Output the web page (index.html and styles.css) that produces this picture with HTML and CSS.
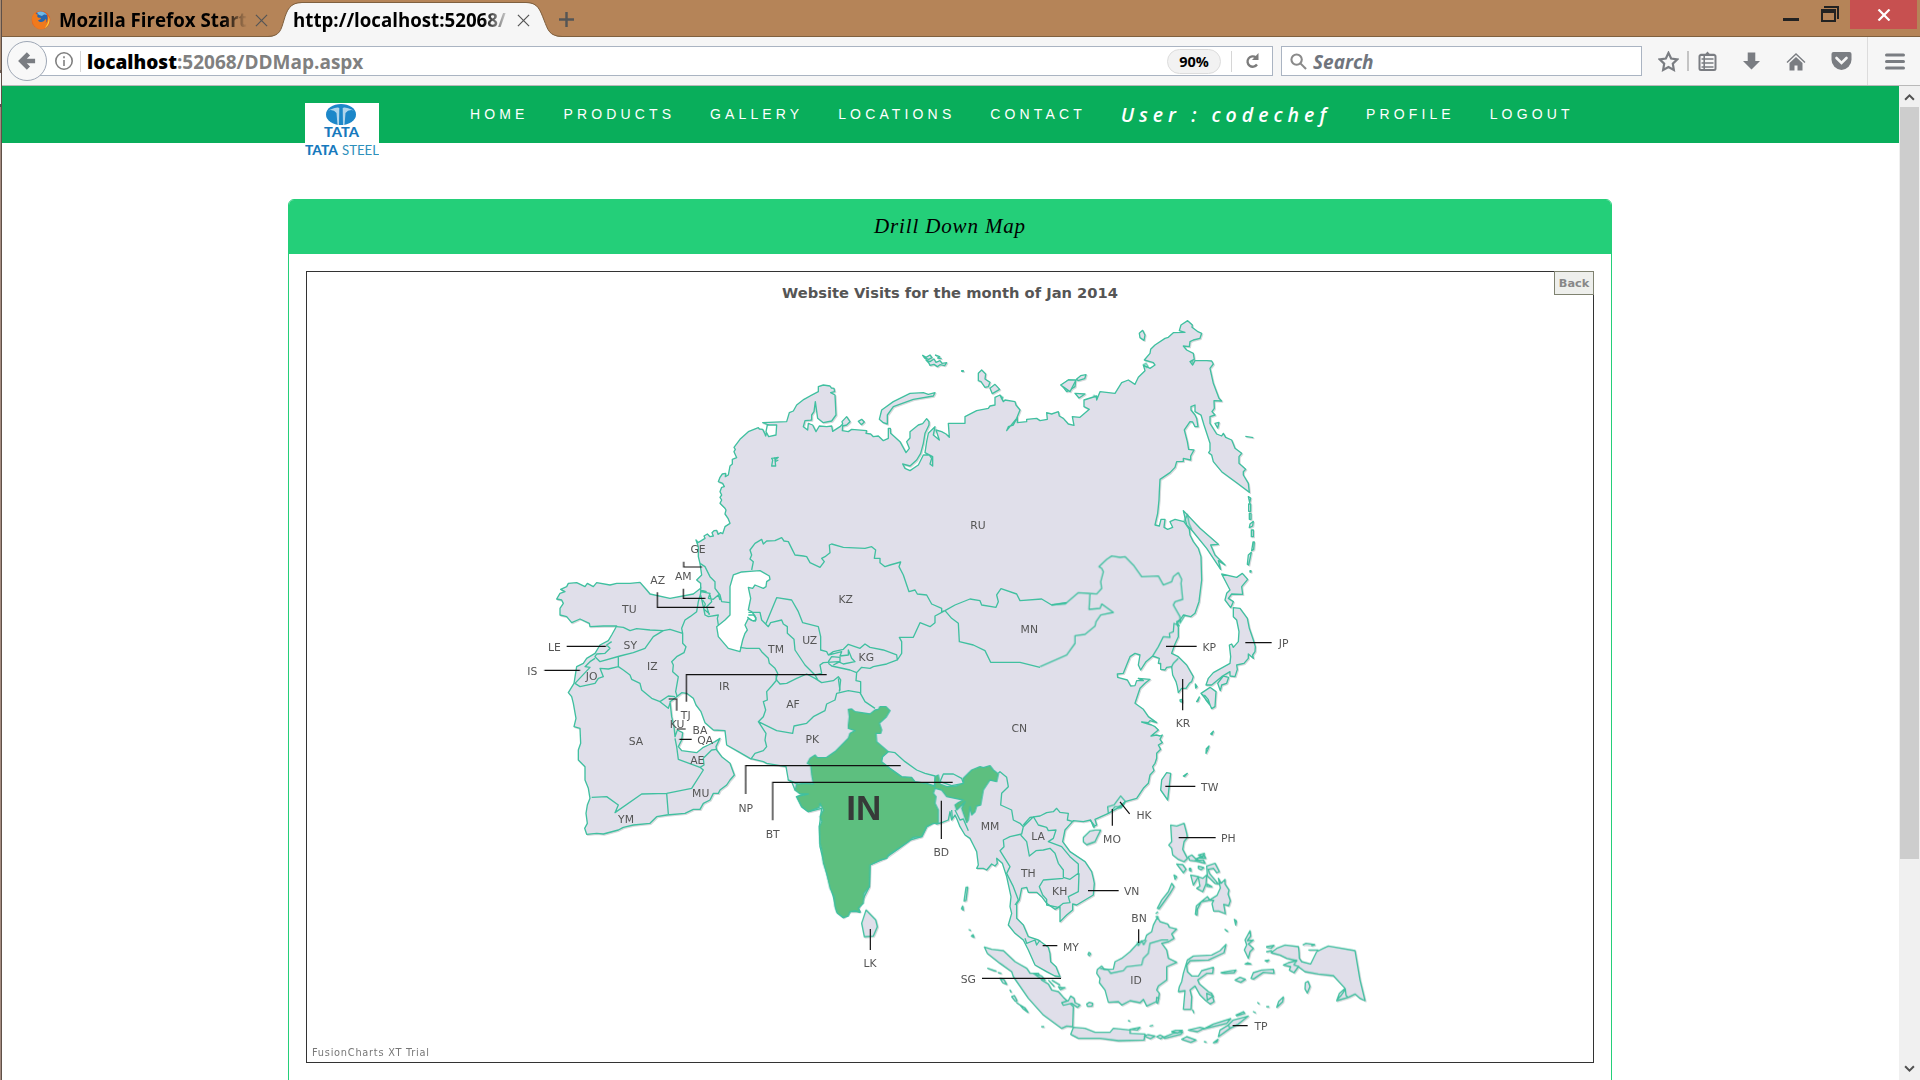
FILE: index.html
```html
<!DOCTYPE html>
<html lang="en">
<head>
<meta charset="utf-8">
<title>Drill Down Map</title>
<link rel="stylesheet" href="styles.css">
</head>
<body>
<div class="window">
  <div class="edge"></div>
  <div class="browser">
    <header class="tabs">
      <div class="tab">
        <svg class="fox" viewBox="0 0 20 20"><circle cx="10" cy="10" r="9.3" fill="#e8601c"/><circle cx="10" cy="8" r="6.600" fill="#2766ad"/><path d="M6 2.500c4-2 8-.5 10 2.500-2-1-4-.5-5 1-2-.5-4-1-5-3.500z" fill="#6fb8e6"/><path d="M1 7c1-2 2-4 3-5 0 2 1 2 3 2.500-1 1-1 2 0 3l3 .5c0 1.500-2 1.500-3 2.500 2 2.500 6 2 7.500-1.500 1.500 1 1 2.500 0 4 2-.5 3-3 3-6 2 4 .5 9-3.500 11.300C9 21 .5 18 1 7z" fill="#f07a1d"/><path d="M17.500 6c2 4 1 9-3.500 12 2.500-4 4-6 3.500-12z" fill="#fcd43c"/></svg>
        <span class="tab-text">Mozilla Firefox Start</span>
        <svg class="x" viewBox="0 0 14 14"><path d="M1 1l12 12M13 1L1 13"/></svg>
      </div>
      <div class="tab active">
        <svg class="tab-shape" viewBox="0 0 294 37"><path class="tab-fill" d="M0 37C12 36 13 30 16 20S22 3 34 3H258C270 3 272 10 276 20S281 36 294 37z"/><path class="tab-line" d="M0 36.500C12 36 13 30 16 20S22 2.500 34 2.500H258C270 2.500 272 10 276 20S281 36 294 36.500"/></svg>
        <span class="tab-text">http://localhost:52068/</span>
        <svg class="x" viewBox="0 0 14 14"><path d="M1 1l12 12M13 1L1 13"/></svg>
      </div>
      <svg class="plus" viewBox="0 0 16 16"><path d="M8 0v16M0 8h16"/></svg>
      <div class="controls">
        <svg class="min" viewBox="0 0 16 3"><path d="M0 0h16v3H0z"/></svg>
        <svg class="restore" viewBox="0 0 18 16"><path d="M3 0h15v13h-2V2H3zM0 3h15v13H0zM2 7v7h11V7z" fill-rule="evenodd"/></svg>
        <div class="close"><svg viewBox="0 0 14 12"><path d="M1.500 0.500l11 11M12.500 .5l-11 11"/></svg></div>
      </div>
    </header>
    <div class="toolbar">
      <div class="back"><svg viewBox="0 0 20 20"><path d="M11 2.500L3.500 10l7.500 7.500M4 10h14" fill="none" stroke="#7a7d82" stroke-width="4.800"/></svg></div>
      <div class="address">
        <svg class="info" viewBox="0 0 18 18"><circle cx="9" cy="9" r="8.200"/><path d="M9 8v6M9 4.300v2"/></svg>
        <i class="rule"></i>
        <span class="url"><b>localhost</b>:52068/DDMap.aspx</span>
        <span class="zoom">90%</span>
        <i class="rule"></i>
        <svg class="reload" viewBox="0 0 14 16"><path d="M11 4.500A5.200 5.200 0 1 0 12 11.500" fill="none" stroke="#7c7c7c" stroke-width="2.300"/><path d="M13.500 0v7H7z" fill="#7c7c7c"/></svg>
      </div>
      <div class="search">
        <svg viewBox="0 0 18 18"><circle cx="7" cy="7" r="5.500"/><path d="M11 11l6 6"/></svg>
        <span>Search</span>
      </div>
      <div class="icons">
        <svg class="star" viewBox="0 0 20 20"><path d="M10 1.800l2.500 5.400 5.900.8-4.300 4.100 1 5.900-5.100-2.800L4.900 18l1-5.900L1.600 8l5.900-.8z" fill="none" stroke="#7a7d82" stroke-width="2.100"/></svg>
        <i></i>
        <svg class="list" viewBox="0 0 18 20"><path d="M6 4l3-3.500L12 4z" fill="#7a7d82"/><rect x="1" y="4" width="16" height="15" rx="1.500" fill="none" stroke="#7a7d82" stroke-width="2"/><path d="M3 8h2M6.500 8H15M3 12h2m1.500 0H15M3 16h2m1.500 0H15M5.700 5v14M2 3.500h14" stroke="#7a7d82" stroke-width="1.600"/></svg>
        <svg class="down" viewBox="0 0 18 18"><path d="M5 0h8v9h5l-9 9-9-9h5z" fill="#7a7d82"/></svg>
        <svg class="home" viewBox="0 0 20 18"><path d="M1 10l9-8.500L19 10" fill="none" stroke="#7a7d82" stroke-width="1.400"/><path d="M3.500 10.500L10 4.500l6.500 6V18h-5v-5h-3v5h-5z" fill="#7a7d82"/></svg>
        <svg class="pocket" viewBox="0 0 20 18"><path d="M2 0h16q2 0 2 2v5.500a10 10.400 0 0 1-20 0V2q0-2 2-2z" fill="#7a7d82"/><path d="M5 6l5 5 5-5" fill="none" stroke="#f6f6f6" stroke-width="2.600" stroke-linecap="round"/></svg>
        <i class="tall"></i>
        <svg class="menu" viewBox="0 0 20 17"><path d="M1.500 2h17M1.500 8.500h17M1.500 15h17" stroke="#7a7d82" stroke-width="3" stroke-linecap="round"/></svg>
      </div>
    </div>
    <div class="viewport">
      <div class="page">
        <nav class="nav">
          <div class="logo">
            <svg viewBox="0 0 74 59">
              <ellipse cx="36" cy="11.500" rx="15" ry="10.500" fill="#1c87c9"/>
              <path d="M23 7.500q10-4.500 11.300-2.500L34 22h-1.500L31.500 10q-3-4-8.500-2.500zM49 7.500q-10-4.500-11.300-2.500L38 22h1.500L40.500 10q3-4 8.500-2.500z" fill="#fff" opacity=".65"/>
              <text x="19" y="34" textLength="35" lengthAdjust="spacingAndGlyphs" class="logo-bold">TATA</text>
              <text x="0" y="51.500" textLength="33" lengthAdjust="spacingAndGlyphs" class="logo-bold small">TATA</text>
              <text x="37" y="51.500" textLength="37" lengthAdjust="spacingAndGlyphs" class="logo-thin">STEEL</text>
            </svg>
          </div>
          <ul class="links">
            <li>Home</li><li>Products</li><li>Gallery</li><li>Locations</li><li>Contact</li><li class="user">User : codechef</li><li>Profile</li><li>Logout</li>
          </ul>
        </nav>
        <section class="panel">
          <h1 class="panel-head">Drill Down Map</h1>
          <div class="panel-body">
            <div class="chart">
              <button class="back-button">Back</button>
              <svg class="map" viewBox="307 272 1286 790">
                <text class="title" x="782" y="298" textLength="336" lengthAdjust="spacingAndGlyphs">Website Visits for the month of Jan 2014</text>
                <g class="land">
                  <!-- mainland -->
                  <g transform="translate(500 300) scale(.33333)">
                    <path d="M588 720L594 728 604 722 615 715 612 708 622 702 630 710 640 708 636 698 642 692 650 691 654 703 662 698 668 701 675 680 690 670 684 655 675 642 678 630 675 625 660 610 665 600 660 592 665 585 660 575 665 562 673 560 668 550 655 545 660 532 667 522 677 520 676 530 685 525 690 498 697 492 697 478 710 473 702 455 706 448 702 442 720 418 745 395 775 383 778 387 788 388 794 400 797 408 806 375 788 368 860 365 868 338 880 333 890 315 912 298 945 280 955 275 955 260 970 255 990 258 994 264 1002 265 1004 275 992 278 1005 285 1008 345 995 363 970 368 953 355 946 305 942 335 935 345 935 360 915 362 910 380 923 390 925 370 938 375 948 395 958 378 980 380 995 378 998 394 1020 380 1028 372 1026 365 1040 350 1050 365 1040 375 1028 378 1027 392 1045 395 1055 388 1100 392 1098 400 1112 402 1120 410 1135 408 1150 422 1165 415 1165 385 1171 385 1172 400 1200 425 1218 458 1228 445 1220 425 1230 414 1230 395 1255 375 1268 371 1280 356 1287 365 1287 375 1275 400 1270 430 1262 460 1250 480 1230 498 1208 492 1215 505 1230 512 1255 495 1270 465 1288 465 1295 475 1290 492 1298 498 1298 470 1275 458 1280 425 1285 400 1305 380 1300 405 1318 420 1308 390 1325 395 1338 402 1348 412 1345 370 1395 370 1395 350 1430 332 1465 325 1470 318 1485 315 1485 292 1500 285 1510 305 1515 300 1545 305 1548 315 1560 330 1550 355 1520 392 1525 380 1540 375 1552 352 1552 368 1580 365 1580 358 1610 355 1620 362 1642 358 1640 338 1655 342 1675 335 1678 348 1690 355 1705 372 1722 376 1717 350 1740 352 1768 328 1752 320 1752 300 1790 288 1790 300 1800 275 1845 280 1865 248 1885 240 1905 253 1915 232 1935 212 1930 195 1950 205 1965 195 1960 188 1933 180 1950 160 1952 148 1965 135 1995 115 2005 112 2020 98 2055 97 2038 92 2043 75 2063 62 2077 75 2076 82 2092 94 2105 100 2100 115 2080 120 2070 125 2068 140 2050 138 2060 150 2080 160 2083 178 2070 185 2078 195 2085 182 2120 182 2135 183 2140 192 2130 205 2140 250 2157 295 2165 303 2142 302 2143 325 2136 335 2145 345 2130 350 2130 370 2150 402 2165 408 2170 400 2177 412 2195 420 2200 432 2205 445 2225 460 2217 470 2217 490 2237 508 2230 515 2230 525 2245 550 2248 577 2210 548 2165 515 2140 485 2135 465 2126 458 2130 452 2130 430 2112 375 2103 345 2085 335 2085 315 2073 320 2073 330 2085 345 2090 355 2094 380 2085 380 2078 366 2070 365 2053 390 2062 425 2066 448 2082 450 2072 468 2072 480 2050 475 2050 484 2030 485 2025 502 2010 518 1980 538 1978 575 1977 600 1973 640 1965 675 1978 678 1983 658 1995 658 1992 682 2003 688 2018 682 2010 665 2025 658 2052 665 2068 688 2070 705 2080 725 2095 745 2103 770 2105 840 2097 905 2085 940 2072 950 2050 945 2040 960 2030 970 2035 982 2035 1010 2025 1032 2015 1060 2035 1070 2060 1095 2080 1130 2075 1145 2068 1150 2058 1165 2045 1165 2035 1178 2032 1160 2028 1145 2018 1125 2015 1100 2000 1102 1995 1110 1982 1108 1982 1090 1975 1090 1978 1075 1958 1068 1938 1085 1922 1110 1915 1095 1920 1065 1905 1060 1890 1070 1882 1090 1870 1120 1852 1122 1853 1132 1882 1140 1892 1158 1905 1157 1910 1142 1930 1142 1915 1135 1950 1138 1935 1150 1920 1165 1905 1210 1930 1228 1945 1250 1970 1268 1950 1262 1945 1268 1925 1266 1955 1275 1965 1280 1975 1290 1953 1308 1970 1305 1980 1308 1987 1305 1980 1318 1987 1328 1975 1335 1982 1348 1970 1360 1970 1375 1965 1390 1958 1400 1962 1412 1950 1425 1945 1450 1930 1465 1910 1495 1875 1505 1860 1520 1825 1540 1785 1558 1790 1575 1780 1580 1772 1560 1750 1565 1720 1562 1695 1590 1688 1625 1710 1655 1755 1685 1775 1715 1780 1735 1783 1750 1780 1785 1755 1800 1730 1815 1718 1812 1718 1830 1700 1845 1680 1865 1680 1820 1665 1828 1640 1810 1625 1790 1610 1777 1585 1777 1580 1762 1565 1765 1558 1800 1550 1812 1550 1855 1570 1875 1585 1910 1615 1920 1645 1942 1650 1960 1652 1985 1668 2000 1680 2030 1665 2028 1640 2015 1605 1995 1585 1950 1570 1920 1545 1900 1525 1875 1535 1840 1530 1820 1533 1790 1520 1730 1507 1690 1490 1675 1492 1690 1485 1698 1475 1692 1460 1710 1450 1705 1430 1705 1435 1695 1430 1655 1420 1635 1410 1615 1395 1605 1380 1580 1372 1560 1365 1545 1355 1560 1350 1535 1345 1560 1325 1568 1310 1572 1300 1568 1280 1580 1265 1610 1230 1620 1190 1650 1155 1675 1110 1695 1108 1760 1090 1795 1075 1825 1080 1835 1050 1835 1030 1853 1010 1835 1000 1790 980 1720 960 1640 958 1580 965 1525 925 1535 905 1520 890 1490 915 1482 885 1470 875 1445 865 1440 858 1400 800 1390 790 1385 750 1375 715 1355 680 1335 675 1292 640 1290 615 1268 603 1235 588 1215 580 1195 560 1180 545 1178 530 1190 510 1205 515 1250 522 1280 525 1310 532 1290 548 1298 545 1320 535 1340 545 1352 590 1358 610 1342 625 1335 645 1325 660 1315 648 1340 650 1350 665 1370 690 1390 703 1425 690 1440 680 1455 660 1470 655 1480 640 1480 630 1500 610 1510 600 1528 580 1528 555 1540 500 1545 470 1550 450 1570 400 1575 370 1582 355 1590 310 1602 290 1600 260 1603 254 1585 262 1570 258 1540 262 1515 270 1495 265 1465 255 1440 255 1400 235 1380 235 1350 242 1330 240 1285 222 1280 228 1255 220 1210 215 1190 205 1178 222 1150 230 1100 250 1090 260 1075 285 1060 300 1035 325 1022 335 1005 350 978 310 978 270 980 268 970 240 957 215 968 200 950 180 945 180 925 190 910 185 900 170 897 180 880 195 875 182 868 200 860 205 850 230 848 255 860 262 850 280 860 290 848 330 855 350 850 390 850 420 847 440 870 450 882 510 895 580 882 602 865 602 850 590 840 605 825 600 790 595 770 595 740z"/>
                    <path class="water" d="M700 825L725 816 750 814 780 812 808 828 810 838 800 845 798 860 790 865 765 855 758 865 745 862 752 895 745 930 755 935 765 948 768 960 760 963 745 955 735 975 742 990 735 1000 728 1020 720 1055 685 1045 655 1010 650 980 675 960 690 945 690 860zM802 375h28l-2 30-22 5-8-15z"/>
                  </g>
                  <!-- arctic islands -->
                  <g transform="translate(680 360) scale(.33333)">
                    <path d="M605 150L640 125 690 100 730 98 745 103 765 98 760 108 700 118 640 140 622 165 622 192 610 188 598 178zM535 184l10-6 8 8-9 8zM895 40l10-10 12 12-2 15 15 10-5 13-10 2-12-17-8-3zM845 32h5v2h-5zM930 85l15-12 14 15-22 13zM1145 75l20-15 22 2-2 18-25 15zM728-14l10 6 12-7 6 8-10 5-12-4zM738 0l12 5 12-8 6 10 12-5 6 8 14-2-6 9-14-3-8 6-10-7-12 3-4-8zM765-15l14 5-6 4 12 2M275 295l20-3-10 8 2 18h-12l3-18zM283 292l4 12 8-4"/>
                  </g>
                  <g transform="translate(1000 300) scale(.33333)">
                    <path d="M182 255L205 240 228 240 210 275zM230 237l12-10 16-3-4 12-20 6zM225 280l30 2-18 12zM418 100l10-9 7 14-3 16-12-8zM550 632L600 685 655 733 632 735 645 765 675 795 655 782 662 808 620 745 575 690 560 675zM745 590l7 4-3 14zM746 612h6v22h-6zM748 640h5v18h-5zM750 672l10-8-2 14-10 5zM754 690h6v20h-6zM759 726l4 0-2 22-6 4zM745 765l9-8-8 38-4-2zM736 409l24 4M645 370l12-3-4 17zM750 812h3v4h-3z"/>
                  </g>
                  <g transform="translate(1040 540) scale(.33333)">
                    <path d="M545 102L590 112 607 100 623 118 605 140 608 163 575 162 565 175 580 185 572 203 555 180 560 160 570 150zM580 203L600 205 622 235 625 250 628 265 640 300 646 320 645 335 638 345 640 355 625 342 625 355 612 370 590 375 592 388 585 410 570 408 570 395 545 410 515 435 498 435 505 415 520 398 570 370 572 350 568 315 575 312 580 322 595 305 597 275 590 240 580 230zM533 430L550 408 566 412 560 430 545 435 541 452zM483 460L510 442 528 455 525 500 515 506 508 490 495 475zM487 462l12 20 12 15-6-18-12-14M512 582l8-8-4 10zM498 640l1-14 8-8-4 12zM430 708l12-8-8 9zM470 485l8-14-4 12zM466 432l5 8-4 4zM420 480l6-2 1 8-6-1zM365 720L380 698 392 700 383 780 362 750z"/>
                  </g>
                  <!-- south and south-east islands -->
                  <g transform="translate(900 780) scale(.33333)">
                    <path d="M198 322l5-1-5 40-6 2zM184 386l4-8 2 12zM207 449l4 2zM214 468l5-4 3 8zM253 501L275 508 310 512 345 545 380 565 390 580 415 580 425 600 445 612 455 630 475 635 490 652 520 680 518 740 500 738 485 745 430 705 385 655 340 590 335 575 300 550 262 520zM550 172L570 153 585 150 602 150 592 170 585 185 560 194 550 186zM-102 390L-73 420-68 440-80 468-107 470-115 430zM512 763L520 742 555 745 585 757 630 757 640 745 690 750 690 760 735 762 732 780 655 782 600 775 535 775zM690 748l30-6-8 8zM733 768l10-4 22 4-14 8zM770 770l10-5 10 5-8 6zM790 772l30-12 28-4-6 7-48 12zM815 755l12-4 20 0-15 8zM865 750l35-8 12 3-20 10zM910 747l30-15 52-16-12 14-50 12zM1008 705l22-10 4 5-24 7zM845 778l15-8 28 10-16 7zM955 770L960 750 985 735 1000 720 1045 708 1015 732 990 745zM940 788l14-10-4 8zM1060 695l6 3zM913 785l5 1z"/>
                    <path d="M590 580L592 568 605 558 612 568 640 567 645 545 665 535 690 515 715 488 735 480 740 465 755 455 760 435 772 412 780 425 803 432 808 442 830 447 815 462 822 475 805 485 785 490 800 510 805 535 830 547 800 560 800 600 775 618 770 630 778 640 775 660 768 665 740 678 730 658 720 668 690 662 665 675 655 665 625 667 615 630 598 608 600 595z"/>
                    <path d="M862 540L880 528 935 525 960 512 978 493 972 518 925 540 870 542 860 555 862 575 875 588 895 588 905 572 940 562 938 580 920 580 893 600 898 612 925 635 935 640 942 665 930 672 915 660 900 645 885 618 870 630 875 650 873 688 850 688 855 632 835 635 838 620 845 605 850 580zM1035 480L1050 452 1052 468 1042 482 1060 480 1045 492 1060 505 1050 515 1045 535 1033 510 1040 495zM1035 552l8-4 10 4zM1053 595L1060 578 1085 570 1120 568 1122 580 1090 577 1060 597zM1005 600l15-8 16 6-14 9zM963 578l20-4 25-4-6 8-28 2zM1100 500l22-4-8 8-14-2zM1100 515l14-3zM1095 542l12-2-6 5zM1208 495l10-5 26 4-10 3M1225 510h30M1113 518L1130 505 1155 495 1195 500 1197 515 1198 535 1205 545 1232 552 1250 515 1270 505 1285 498 1365 512 1380 600 1395 662 1380 655 1365 642 1345 652 1310 662 1318 640 1335 625 1300 587 1255 582 1215 575 1195 560 1182 578 1168 570 1172 560 1150 555 1165 548 1190 542 1160 535 1140 525zM1310 660l12-12 14-20 2 18 6 6M1216 608l8-4 6 15-8 20-7-12zM1130 682l6-18 14-13-2 14zM1100 680l6 0zM1073 668l4 3z"/>
                    <path d="M812 135L830 138 852 130 860 160 862 172 852 185 848 208 862 235 852 245 835 238 818 225 815 205 806 195 815 185zM830 252l18 2 10 14-8 10zM865 230l10-5 12 12 25-12 5 10-20-2-10 10-18-2zM895 225l18-5-4 10zM885 242l25-2 5 10-18-5zM868 265l4 0 1 8-5-2zM895 258l16 5-8 6-8-4zM920 258L945 250 958 275 950 278 940 265 925 268 928 280 955 312 945 310 922 288zM872 285L895 290 880 315zM898 310L895 290 908 295 920 285 918 312 908 335 890 325 900 318zM922 312l14 8-15-1zM955 295l8 15 12-12 0 14 12 18-3 12 7 20-5 15-15-4 5 28-20-8-15 0-5-22 5-10-15 0-22 4-12 22-1 18-5-2 3-25 18-16 15-12 7 10 22-14 10-22zM772 385L785 360 805 335 815 310 822 320 810 340 790 368 777 386zM822 285l8 5-5 8zM768 400l5-4zM975 448l8 6-3-1zM1003 418l6 5-2 12zM768 410h6zM567 517l5 4-4 6-4-4zM560 672l8-5 10 3-2 8-14 1zM485 668L505 662 512 648 522 655 525 668 540 675 532 682 515 670 490 676zM475 620l10 3 10 0-14 6zM455 600l25 15M445 600l18 20M300 595l12 4 8 14-12-5zM263 565l20 7 5 1zM335 650l8-3 8 15-5 2zM350 668l14 10zM360 675l14 8 10 14-14-10zM330 630l3 6zM295 578l8 2zM425 740l6 0zM770 652l6 2-3 16-4-3zM878 690l3 8zM685 722l4 1zM750 738l8-2zM920 640l20 8-18 12zM400 580l25 8 10 12-15-6z"/>
                  </g>
                </g>
                <!-- India -->
                <g transform="translate(780 640) scale(.33333)">
                  <path class="india" d="M205 208L215 207 225 215 270 222 285 210 295 208 300 200 318 200 330 212 318 232 298 250 305 270 302 280 288 280 290 305 325 335 308 350 305 365 330 385 365 410 395 412 405 425 440 430 465 440 465 410 475 405 480 432 500 440 530 438 550 428 550 415 575 390 600 380 610 383 630 377 640 390 655 402 650 425 630 420 610 450 602 495 590 498 585 515 575 525 570 500 565 540 560 548 545 505 555 485 540 500 530 510 525 495 535 488 550 480 500 470 485 450 465 445 460 460 468 470 465 490 475 510 475 550 460 550 440 560 425 590 400 592 385 605 360 622 325 645 320 655 300 660 270 675 268 740 252 760 250 790 235 805 240 818 225 812 210 815 205 828 190 833 172 820 165 800 162 770 150 745 140 700 130 670 125 630 120 610 118 560 125 545 120 530 130 510 120 490 118 502 85 515 65 500 50 470 85 462 60 462 45 450 50 432 25 420 55 432 78 430 100 432 95 405 92 375 82 370 90 355 105 345 112 353 140 352 165 335 205 295 210 280 225 272 205 265 205 255 208 230z"/>
                </g>
                <g class="borders">
                  <g transform="translate(500 520) scale(.33333)">
                    <path d="M350 320L370 322 390 332 410 326 450 330 490 332 510 328 548 340 545 325 555 300 570 290 590 275 595 245 602 220V200M490 332L460 350 435 385 400 398 360 408 300 425 285 410 290 402 315 400 330 385 320 375 335 365M355 410V440L325 447 300 445 310 470 295 475 285 490 240 500 225 490 270 442 255 440 270 425 285 415M355 440L370 450 390 465 395 478 420 490 425 510 455 535 480 545 505 528 525 530M480 545L505 565 510 550M548 340L548 370 558 380 552 398 530 410 515 425 520 435 518 455 535 470 527 515 532 530M602 225L610 260 615 285 625 290 655 285 652 295 655 315M600 130L615 140 630 170 645 185 645 205 660 225 665 245 690 248M602 215L630 220 625 235 640 238 655 225 660 240M630 225L635 245 620 260 628 285M600 210L620 215M608 240l8 12-5 15 18 15M525 655L530 680 535 718 600 742 610 750 575 805 500 820 425 822 345 878 355 855 320 830 275 832M600 742L612 735 610 715 635 690 650 688M500 820L505 882M828 465L830 480 815 498 800 515 802 540 790 545 797 570 790 590 775 605 830 632 878 640 882 618 920 610 940 590 975 572 980 552 1005 540 1010 520 1045 512 1080 518 1095 545 1125 565M775 605L798 640 795 660 800 680 790 692 765 700 752 718M1015 475L1020 512"/>
                  </g>
                  <g transform="translate(680 360) scale(.33333)">
                    <path d="M215 630L220 605 210 597 215 585 210 570 225 550 245 538 250 552 260 543 285 542 305 533 312 543 325 545 335 565 345 585 370 588 380 590 390 608 420 622 433 605 425 595 435 590 450 578 448 555 455 552 490 562 555 565 575 560 587 570 583 595 600 595 600 608 615 620 630 615 662 606 657 620 670 645 687 695 705 690 712 702 740 705 755 732 785 745 785 755 795 752 825 735 870 717 900 722 905 735 948 742 955 725 950 705 963 686 1010 702 1020 722 1085 717 1115 735 1160 728M795 752L815 775 835 790 838 845 880 855 915 872 932 907 1020 907 1080 922M795 752L765 768 765 788 750 800 720 788 700 832 658 832 665 845 665 880 652 900 650 885 610 870 570 862 555 852 540 865 505 853 490 868 460 875 445 885 440 875 422 870 422 830 415 800 368 788 355 755 335 720 290 713 257 793M205 757L240 757 245 780 265 800 272 788 305 780 310 792 322 800 322 820 342 838 345 870 375 915 405 945 415 962M445 885L465 880 485 875 480 888 505 885 505 870 515 895 525 905 490 912 475 905 430 908 420 915 425 940 405 945M445 905L455 890 480 892 480 905 460 915M652 900L620 912 580 920 570 925 545 922 530 938 510 930 455 918 445 910M530 938L528 962 542 965 542 1000M180 862L200 865 238 865 245 875 265 895 268 910 285 925 293 940 288 958 300 972 320 970 350 955 380 942 405 955 425 968 460 962 475 950 482 960 478 995M205 765l15 0 8 8-2 10-12-2-12-10"/>
                  </g>
                  <g transform="translate(1000 300) scale(.33333)">
                    <path d="M155 915L195 912 235 878 265 880 290 882 305 865 302 845 310 815 305 805 297 800 320 778 335 768 360 772 375 770 400 795 425 830 475 828 490 855 515 845 520 830 535 818 545 838 543 850 548 898 525 905 520 915 540 950 540 970 555 945M155 915L200 908M270 880L267 928 300 925 305 912 340 937 302 945 288 965 285 978 255 1003 225 1007 225 1030 200 1065 120 1100M552 665l10-22 5 28 8 18M430 195l8-5 6 10-8 2M1 288l8 5-5 5M280 285l12 10M575 180l5 12"/>
                  </g>
                  <g transform="translate(1040 540) scale(.33333)">
                    <path d="M420 240L410 245 418 258 402 250 400 275 388 280 390 292 370 290 355 320 338 348M395 380L400 370 415 355M205 820L203 800 222 795 242 768 257 785 240 800 225 800 215 812M235 800l18-8-10 12-10 0"/>
                  </g>
                  <g transform="translate(780 640) scale(.33333)">
                    <path class="plain" d="M325 335L345 338 375 365 410 390 435 400 465 408 463 438 440 430 405 425 395 412 365 410 330 385 305 365 308 350zM480 425L490 402 520 402 545 415 550 430 515 437z"/>
                    <path d="M655 400L660 395 680 412 685 440 665 460 662 495 695 510 700 540 720 550 730 560 725 582 690 590 670 600 672 620 660 632 690 680 680 700 700 740 715 780 705 795M730 560L760 530 775 555 800 562 805 572 828 570 820 595 805 605 845 620 870 650 895 672 895 700 870 718 850 712 850 690 835 670 825 640 810 625 790 630 768 632 748 648 740 605 722 585M730 555L750 532 780 528 800 518 820 515 830 505 840 517 865 520 862 540 880 545M850 715L790 720 778 740 788 765 800 778 800 795 835 802 850 790 870 788 865 770 895 755 897 700M735 895L740 910 765 900 770 915 780 900M525 510l15 30 10-3 15 35M515 510l2 25M930 540l12 15 0 10"/>
                  </g>
                  <g transform="translate(900 780) scale(.33333)">
                    <path d="M600 565L625 570 632 580 670 572 680 560 725 555 730 535 745 520 750 490 785 480 805 480M712 485l3 12 10-15 6 12 8-14M1190 540l-8 15 15 5M985 735l5 10"/>
                  </g>
                </g>
                <g class="leaders">
                  <g transform="translate(500 520) scale(.33333)"><path d="M551 125V141H606M550 206V235H616M472 217V262H643M200 379H318M133 451H240M559 545V464H980M506 537H530V572M530 627H557M538 658H575M737 822V737H1202M818 901V787H1358"/></g>
                  <g transform="translate(780 640) scale(.33333)"><path d="M484 482V597M271 867V930M997 507V557M1020 486L1049 522M924 752H1016M1076 868V909M788 917H832"/></g>
                  <g transform="translate(900 780) scale(.33333)"><path d="M796 19H886M836 173H947M246 595H483M998 737H1043"/></g>
                  <g transform="translate(1040 540) scale(.33333)"><path d="M616 308H695M378 319H470M428 417V511"/></g>
                </g>
                <g class="labels">
                  <text x="698" y="553">GE</text><text x="657.700" y="584">AZ</text><text x="683.300" y="580">AM</text><text x="629.300" y="613">TU</text><text x="554.300" y="651">LE</text><text x="532.300" y="675">IS</text><text x="630.300" y="649">SY</text><text x="652.300" y="670">IZ</text><text x="591.700" y="680">JO</text><text x="724.300" y="690">IR</text><text x="776" y="653">TM</text><text x="809.700" y="644">UZ</text><text x="845.700" y="603">KZ</text><text x="866.300" y="661">KG</text><text x="793" y="708">AF</text><text x="812.300" y="743">PK</text><text x="636" y="745">SA</text><text x="685.700" y="719">TJ</text><text x="677" y="728">KU</text><text x="700" y="734">BA</text><text x="705.300" y="744">QA</text><text x="697.300" y="764">AE</text><text x="700.700" y="797">MU</text><text x="626" y="823">YM</text><text x="745.700" y="812">NP</text><text x="772.700" y="838">BT</text>
                  <text x="978" y="529">RU</text><text x="1029.300" y="633">MN</text><text x="1019.300" y="732">CN</text><text x="1144" y="819">HK</text><text x="1112" y="843">MO</text><text x="990" y="830">MM</text><text x="1038" y="840">LA</text><text x="941.300" y="856">BD</text><text x="1028.300" y="877">TH</text><text x="1059.700" y="895">KH</text><text x="1131.700" y="895">VN</text><text x="1139" y="922">BN</text><text x="870" y="967">LK</text><text x="1071" y="951">MY</text><text x="1209.700" y="791">TW</text><text x="1228.300" y="842">PH</text><text x="968.300" y="983">SG</text><text x="1136" y="984">ID</text><text x="1261" y="1030">TP</text><text x="1209.300" y="651">KP</text><text x="1283.700" y="647">JP</text><text x="1183" y="727">KR</text>
                  <text class="big" x="863.700" y="820">IN</text>
                </g>
                <text class="trial" x="312" y="1056" textLength="117">FusionCharts XT Trial</text>
              </svg>
            </div>
          </div>
        </section>
      </div>
      <div class="scrollbar">
        <svg viewBox="0 0 10 7"><path d="M1 6l4-4 4 4"/></svg>
        <div class="thumb"></div>
        <svg viewBox="0 0 10 7"><path d="M1 1l4 4 4-4"/></svg>
      </div>
    </div>
  </div>
</div>
</body>
</html>
```
FILE: styles.css
```css
* { box-sizing: border-box; }
body { margin: 0; font-family: "Open Sans", "Segoe UI", sans-serif; background: #fff; overflow: hidden; }
svg { display: block; flex: none; }
.window { display: flex; width: 1920px; height: 1080px; overflow: hidden; }
.edge { width: 2px; background: linear-gradient(#a98a70 0 70px, #6b5a50 70px 73px, #f4f4f4 73px 104px, #555 104px 107px, #a48b80 107px); border-right: 1px solid #5f5048; }
.browser { flex: 1; display: flex; flex-direction: column; min-width: 0; }

.tabs { height: 37px; background: #b58458; border-bottom: 1px solid #7f603f; display: flex; align-items: flex-start; }
.tab { width: 266px; height: 37px; padding: 3px 0 0 29px; display: flex; align-items: center; position: relative; }
.tab.active { width: 294px; padding-left: 25px; }
.tab-shape { position: absolute; left: 0; top: 0; width: 294px; height: 37px; }
.tab-fill { fill: #f6f6f6; }
.tab-line { fill: none; stroke: #7f603f; stroke-width: 1; }
.fox { width: 20px; height: 20px; margin-right: 8px; }
.tab-text { position: relative; width: 188px; overflow: hidden; white-space: nowrap; font-size: 18.7px; line-height: 28px; font-weight: 700; color: #000; -webkit-mask-image: linear-gradient(90deg, #000 165px, transparent 188px); mask-image: linear-gradient(90deg, #000 165px, transparent 188px); }
.active .tab-text { width: 216px; -webkit-mask-image: linear-gradient(90deg, #000 190px, transparent 218px); mask-image: linear-gradient(90deg, #000 190px, transparent 218px); }
.x { position: relative; width: 13px; height: 13px; margin-left: 8px; fill: none; stroke: #555; stroke-width: 1.3; }
.plus { width: 15px; height: 15px; margin: 12px 0 0 -3px; z-index: 1; fill: none; stroke: #555; stroke-width: 2.6; }
.controls { margin-left: auto; display: flex; align-items: flex-start; fill: #222; }
.min { width: 16px; height: 3px; margin-top: 18px; }
.restore { width: 18px; height: 16px; margin: 6px 11px 0 22px; }
.close { width: 67px; height: 29px; margin-right: 3px; background: #c75050; display: flex; align-items: center; justify-content: center; }
.close svg { width: 14px; height: 12px; fill: none; stroke: #fff; stroke-width: 2.2; }

.toolbar { height: 49px; background: #f6f6f6; border-bottom: 1px solid #b9b9b9; display: flex; align-items: center; padding-left: 5px; }
.back { width: 40px; height: 40px; border: 1px solid #9ea7b5; border-radius: 50%; background: #f8f8f8; display: flex; align-items: center; justify-content: center; z-index: 1; }
.back svg { width: 19px; height: 20px; }
.address { width: 1233px; height: 30px; margin-left: -7px; background: #fff; border: 1px solid #aab4c2; border-left: 0; display: flex; align-items: center; }
.info { width: 18px; height: 18px; margin: 0 7px 0 15px; fill: none; stroke: #808080; stroke-width: 1.6; }
.rule { width: 1px; height: 21px; background: #d6d6d6; }
.url { margin: 0 auto 0 6px; padding-top: 2px; font-size: 19px; font-weight: 700; color: #808080; }
.url b { color: #000; }
.zoom { width: 54px; height: 25px; margin-right: 10px; border: 1px solid #ddd; border-radius: 13px; background: #f2f2f2; font: 700 14.5px/23px "Open Sans", sans-serif; text-align: center; color: #000; }
.reload { width: 14px; height: 16px; margin: 0 13px 0 13px; }
.search { width: 361px; height: 30px; margin-left: 8px; background: #fff; border: 1px solid #aab4c2; display: flex; align-items: center; font-size: 19px; font-style: italic; font-weight: 700; color: #70757d; }
.search span { padding-top: 2px; }
.search svg { width: 17px; height: 17px; margin: 0 6px 0 8px; fill: none; stroke: #8a8a8a; stroke-width: 2.2; }
.icons { display: flex; align-items: center; height: 48px; }
.icons i { width: 2px; height: 20px; background: #c4c4c4; margin: 0 9px 0 8px; }
.icons .tall { width: 1px; height: 48px; background: #dcdcdc; margin: 0 17px 0 15px; }
.star { width: 21px; height: 21px; margin-left: 16px; }
.list { width: 19px; height: 20px; }
.down { width: 17px; height: 18px; margin-left: 26px; }
.home { width: 20px; height: 19px; margin-left: 26px; }
.pocket { width: 21px; height: 18px; margin-left: 25px; }
.menu { width: 20px; height: 17px; }

.viewport { flex: 1; display: flex; min-height: 0; }
.page { width: 1897px; background: #fff; display: flex; flex-direction: column; }
.nav { height: 57px; background: #09ae5b; display: flex; align-items: flex-start; padding-left: 303px; }
.logo { width: 74px; height: 59px; margin-top: 17px; background: #fff; z-index: 1; }
.logo-bold { font: 900 13px Lato, sans-serif; fill: #1779bd; }
.logo-bold.small { font-size: 13.5px; }
.logo-thin { font: 400 13.5px Lato, sans-serif; fill: #2e90bb; }
.links { display: flex; list-style: none; margin: 15px 0 0 91px; padding: 0; gap: 34.8px; font: 14px/26px "Liberation Sans", Arial, sans-serif; letter-spacing: 4.15px; color: #fff; text-transform: uppercase; white-space: nowrap; }
.links .user { font: italic 600 19.5px/28px "Open Sans", sans-serif; letter-spacing: 5px; text-transform: none; }

.panel { width: 1324px; margin: 56px 0 -20px 286px; flex: 1; border: 1px solid #24cf79; border-radius: 6px; overflow: hidden; }
.panel-head { margin: 0; height: 54px; background: #24cf79; text-align: center; font: italic 400 21px/52px "Monotype Corsiva", "Lucida Calligraphy", "Liberation Serif", serif; letter-spacing: .85px; color: #000; }
.panel-body { padding: 17px; }
.chart { width: 1288px; height: 792px; border: 1px solid #333; position: relative; }
.map { width: 1286px; height: 790px; }
.back-button { position: absolute; right: -1px; top: -1px; width: 40px; height: 24px; padding: 0; border: 1px solid #7f8270; background: #eeefec; color: #888; font: 700 11.3px "DejaVu Sans", Verdana, sans-serif; }
.title { font: 700 14.6px "DejaVu Sans", Verdana, sans-serif; fill: #555; }
.trial { font: 9.8px "DejaVu Sans", Verdana, sans-serif; fill: #777; }
.land { filter: drop-shadow(1px 1px 0 rgba(70, 80, 90, .22)); }
.land path, .india, .borders path { stroke-linejoin: round; stroke: #40c0a0; stroke-width: 4; }
.land path { fill: #e0dfea; }
.land .water { fill: #fff; }
.india { fill: #5dbf7f; }
.borders path { fill: none; }
.borders .plain { fill: #e0dfea; }
.leaders path { fill: none; stroke: #111; stroke-width: 3.6; }
.labels { font: 10.8px "DejaVu Sans", Verdana, sans-serif; fill: #555; text-anchor: middle; }
.labels .big { font: 700 35px "Liberation Sans", Arial, sans-serif; fill: #363a38; }

.scrollbar { flex: 1; background: #f0f0f0; display: flex; flex-direction: column; align-items: center; }
.scrollbar svg { width: 11px; height: 8px; margin: 7px 0; fill: none; stroke: #505050; stroke-width: 1.8; }
.thumb { width: 19px; height: 752px; background: #cdcdcd; margin: -1px 0 auto; }
```
